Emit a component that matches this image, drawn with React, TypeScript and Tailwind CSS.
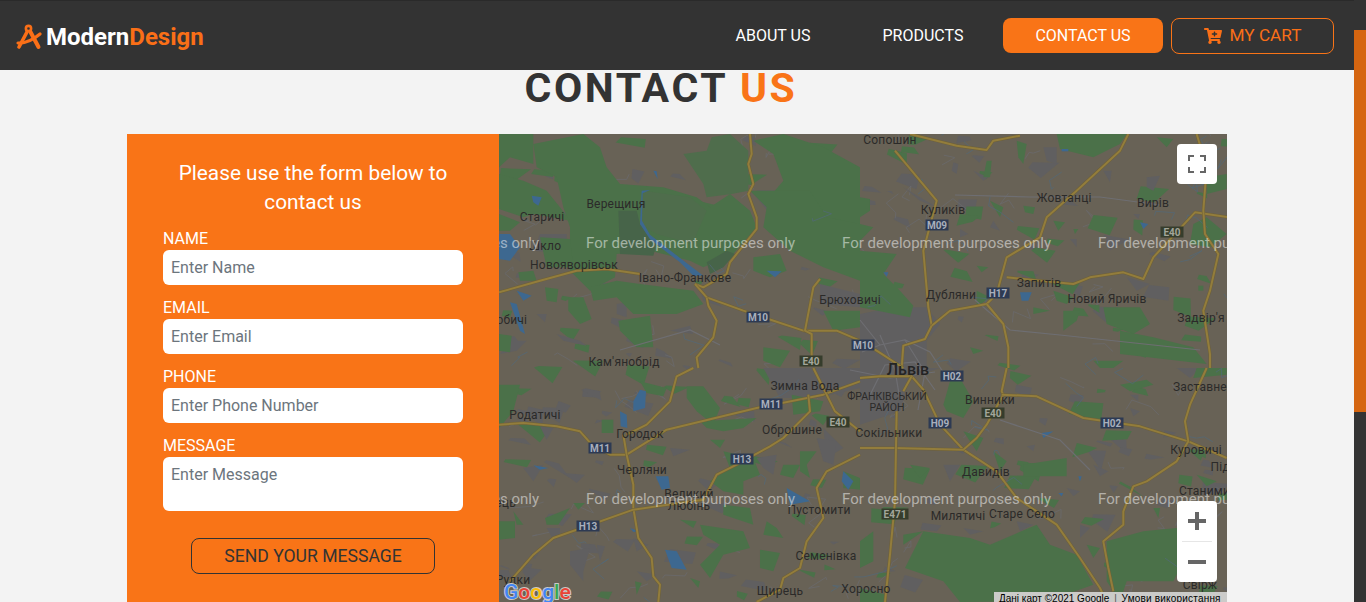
import { FaCartPlus } from "react-icons/fa";

type Q = { x: number; y: number; green: string[]; gray: string[]; water: string[]; roads: string[] };

const quads: Q[] = [
  {
    x: 490, y: 134,
    green: [
      "200,130 140,100 130,30 280,0 330,40 350,100 390,150 520,160 620,190 660,220 720,180 780,230 800,280 730,360 640,400 600,380 480,350 380,360 375,430 300,470 240,410 240,280 220,220",
      "27,120 100,140 170,170 210,220 240,260 130,240 100,250 27,225",
      "27,0 130,0 130,90 60,70 27,100",
      "300,460 380,440 450,450 610,470 640,510 560,540 430,540 380,490 310,500",
      "385,560 480,545 490,640 440,640 390,590",
      "235,490 280,490 305,555 270,570 235,530",
      "790,20 880,0 1000,40 1110,100 1110,290 1020,330 960,260 820,210 880,140 850,60",
      "780,170 960,170 1010,250 1110,270 1110,440 1000,400 900,350 820,280 830,220",
      "790,370 870,360 890,410 840,430 790,410",
      "820,640 900,650 870,700 820,680",
      "1000,530 1110,530 1110,580 1030,590",
      "165,460 205,465 200,505 170,500",
      "27,600 65,605 60,655 27,650",
      "85,415 130,410 140,440 90,440",
      "27,240 90,265 60,290 27,290",
      "150,310 240,315 250,400 170,400",
    ],
    gray: [
      "150,300 230,300 230,360 130,350",
      "200,600 270,620 290,635 220,620",
      "60,620 110,620 80,650 30,660",
      "630,470 700,520 640,500",
      "380,510 410,505 410,550 380,540",
      "140,540 170,540 165,565",
      "540,590 600,575 610,600",
      "990,450 1110,480 1110,520 990,510",
      "205,240 295,205 290,220 235,250",
    ],
    water: [
      "27,300 60,300 90,340 60,380 27,375",
      "125,185 155,190 145,215 130,205",
      "490,110 500,112 503,135",
      "455,170 480,168 458,178 456,260 480,302 570,372 640,425 610,425 570,385 480,316 450,270",
      "60,505 80,510 105,600 90,590",
      "80,470 125,485 100,500",
      "830,410 875,412 855,430",
    ],
    roads: [
      "M27,475 L150,440 L260,410 L350,405 L450,420",
      "M780,0 L785,60 L775,90 L790,150 L775,180 L800,250 L800,285 L720,385 L710,420 L640,460 L615,450",
      "M615,450 L650,490 L760,530 L940,590 L1040,590 L1110,620",
      "M650,490 L655,515 L680,560 L670,610 L620,670 L625,702",
      "M990,435 L970,460 L945,590 L965,600 L965,680",
    ],
  },
  {
    x: 860, y: 134,
    green: [
      "0,190 30,195 30,230 0,250", "0,270 40,280 0,320",
      "380,80 395,80 390,130 370,130",
      "590,0 800,0 780,30 700,70 600,45", "890,10 940,15 920,40",
      "470,20 500,30 490,90 475,70",
      "1040,130 1100,120 1100,165 1040,180",
      "1000,270 1040,250 1100,300 1050,340 990,330",
      "490,215 525,220 520,240 495,235", "580,260 615,265 595,290", "390,200 430,220 420,250",
      "0,350 110,360 70,420 120,470 160,515 150,550 0,520",
      "350,470 390,490 350,520", "580,470 640,490 620,510 590,500",
      "520,520 570,530 520,540", "610,530 660,530 650,560 610,590",
      "730,520 840,520 870,570 820,600 740,570",
      "780,590 880,610 1000,640 1040,690 780,660",
      "700,680 790,680 760,702 720,702", "330,640 370,650 340,660",
      "1015,455 1030,455 1030,470 1015,470", "350,395 385,400 365,415",
      "640,285 655,285 645,300",
    ],
    gray: [
      "0,540 100,520 200,520 240,570 200,620 200,702 0,702",
      "130,160 230,220 180,200", "550,40 590,40 590,90 560,80",
      "340,110 385,130 370,140", "860,130 900,125 880,170 860,160",
      "730,110 755,110 750,145", "630,315 650,315 650,340",
      "400,260 420,290 390,280", "800,430 870,450 830,470",
      "280,85 295,90 290,120 275,110", "300,285 325,300 300,310",
      "820,240 840,240 835,255", "1030,40 1050,20 1040,100",
    ],
    water: [
      "480,475 515,475 505,500 485,500",
      "840,265 865,270 850,285",
      "605,45 625,45 625,52 605,52",
      "70,415 85,415 80,428",
    ],
    roads: [
      "M150,0 L290,35 L380,48 L400,20 L480,5",
      "M105,50 L230,200 L190,350 L205,520 L215,575 L195,615 L130,635 L125,702",
      "M215,575 L270,530 L380,510 L410,480 L440,370 L540,310 L560,250 L650,170 L780,50 L805,0",
      "M440,430 L640,450 L690,430 L790,415 L850,435 L880,370 L1005,235 L1110,250",
      "M1010,0 L1040,100 L1030,230 L1035,300 L1075,360 L1050,470 L1030,530 L1050,660 L1050,702",
      "M380,510 L430,570 L445,640 L445,702",
      "M0,625 L50,650 L130,702",
    ],
  },
  {
    x: 490, y: 368,
    green: [
      "450,40 530,60 520,85 470,75",
      "590,55 640,55 690,120 670,170 620,130 590,90",
      "335,155 370,155 370,195 335,195",
      "630,160 800,150 760,180 700,190 650,180",
      "660,215 705,215 690,240",
      "700,250 790,270 810,320 760,340 760,380 700,370 660,340 720,300",
      "880,290 930,290 910,330 870,320",
      "930,250 980,250 950,290 960,330 930,310",
      "700,410 780,420 790,470 700,440",
      "570,455 620,460 610,480",
      "630,470 760,490 780,540 700,560 660,630 630,590 690,530 640,500",
      "810,545 870,555 850,610 810,600",
      "830,460 860,480 880,510 820,500",
      "70,430 100,470 80,470",
      "165,450 240,420 205,470 170,470",
      "27,460 75,460 75,510 27,515",
      "250,405 285,405 265,425",
      "905,80 1000,100 990,130 910,140",
      "27,50 90,50 70,130 27,180",
      "600,630 630,640 625,660",
      "435,640 455,645 440,680",
      "1060,310 1110,330 1110,365 1060,360",
    ],
    gray: [
      "800,270 860,260 850,320 820,300", "240,550 300,540 280,610 240,590",
      "240,590 280,590 280,640", "100,300 160,290 130,340",
      "320,530 345,535 330,580", "170,480 210,480 210,510 190,515",
      "1000,180 1060,240 1010,270",
      "820,0 1110,0 1110,60 980,90 870,90",
      "980,210 1040,220 1030,290 1000,280",
      "540,240 600,245 550,265", "220,315 285,320 260,345",
      "150,175 190,180 170,215", "430,510 475,530 440,550", "440,610 500,620 470,640",
    ],
    water: [
      "430,100 450,65 468,70 465,120 430,130",
      "390,130 410,140 412,180 392,175",
      "497,325 535,325 540,360 515,365",
      "525,545 560,550 590,605 545,600",
      "890,360 960,400 900,410",
      "1060,310 1090,340 1075,365 1055,340",
      "130,292 175,300 150,305",
      "420,480 445,490 430,492",
    ],
    roads: [
      "M610,0 L560,25 L540,100 L470,170 L410,200",
      "M27,170 L100,165 L200,175 L270,190 L310,235 L360,260 L410,260 L530,185 L800,120 L1000,80 L1110,40",
      "M400,200 L410,260 L430,350 L430,420 L445,510 L485,570 L490,625 L510,650 L505,702",
      "M60,640 L130,560 L190,510 L430,425 L640,395 L680,320 L740,290 L840,235 L880,210 L960,130 L955,80",
      "M970,0 L1035,130 L1110,190",
      "M1110,260 L1010,310 L980,360 L1000,450 L950,520 L930,600 L880,630 L870,665 L800,702",
    ],
  },
  {
    x: 860, y: 368,
    green: [
      "270,40 300,30 340,100 310,150 260,130 250,110",
      "490,290 620,270 620,325 490,325",
      "150,290 210,300 180,330",
      "400,250 440,280 420,310",
      "190,490 330,510 390,530 530,470 570,530 650,560 700,650 560,700 300,702 250,640 135,600",
      "0,520 40,490 40,580 0,600",
      "740,520 850,490 950,480 980,560 940,640 800,640 780,700 740,640",
      "1010,320 1070,340 1040,355",
      "780,50 860,35 880,50 810,70",
      "680,530 720,540 700,570",
      "130,500 190,490 130,530",
      "0,660 80,680 70,702 0,702",
      "880,420 900,420 895,450",
      "310,190 370,210 350,250",
      "1000,30 1100,20 1100,0 1010,0",
    ],
    gray: [
      "0,0 240,0 150,30 120,130 0,170",
      "810,80 835,80 835,100", "810,120 840,130 820,145",
      "700,290 745,310 720,325", "620,360 660,370 640,385",
      "500,235 525,230 520,250", "310,480 370,490 330,500",
      "470,460 520,470 480,490", "660,470 690,480 660,510",
      "250,290 300,290 270,340", "950,0 1020,0 990,30",
    ],
    water: ["595,375 610,375 605,385", "545,195 580,190 550,210", "655,325 665,325 660,340"],
    roads: [
      "M0,30 L60,25 L155,25 L190,65 L240,170 L310,245 L410,310 L470,390 L590,470 L660,570 L720,660 L740,702",
      "M0,240 L100,240 L310,245 L350,210 L380,170 L430,80 L425,70 L440,0",
      "M110,130 L105,400 L90,560 L75,702",
      "M155,25 L130,70",
      "M425,80 L530,85 L670,150 L840,175 L985,220 L1100,270",
      "M1040,0 L990,110 L975,160 L985,220 L950,280 L860,340 L820,355 L790,430 L790,470 L730,520 L745,600 L760,670",
    ],
  },
];

const forest = [
  "580,60 650,50 665,10 720,0 775,50 775,170 725,180 650,190 640,150",
  "460,170 600,190 650,230 620,300 610,330 500,300 450,270",
];
const forestDark = ["385,230 440,230 450,270 500,330 490,365 390,360", "650,385 710,350 735,360 700,400 660,420"];

/* small scattered fields, lanes and streams: the fine grain of the map */
function makeGrain() {
  let s = 20210;
  const r = () => {
    s = (s * 1103515245 + 12345) & 0x7fffffff;
    return s / 0x7fffffff;
  };
  const blob = (w: number) => {
    const x = 499 + r() * 728;
    const y = 134 + r() * 468;
    return `${x},${y} ${x + w * (0.5 + r())},${y + w * 0.3 * r()} ${x + w * (0.3 + r())},${y + w * (0.4 + r() * 0.6)} ${x - w * 0.3 * r()},${y + w * 0.7 * r()}`;
  };
  const line = () => {
    const x = 499 + r() * 728;
    const y = 134 + r() * 468;
    return `M${x},${y} l${20 * r() - 10},${20 * r() - 10} l${40 * r() - 20},${24 * r() - 12} l${30 * r() - 15},${24 * r() - 12}`;
  };
  return {
    green: Array.from({ length: 110 }, () => blob(8 + r() * 14)),
    gray: Array.from({ length: 120 }, () => blob(6 + r() * 16)),
    lanes: Array.from({ length: 90 }, line),
    streams: Array.from({ length: 45 }, line),
  };
}
const grain = makeGrain();

const cityLines = [
  "M862,352 L880,345 L905,340 L930,352 L945,375",
  "M870,395 L885,365 L915,362 L935,390",
  "M880,335 L895,370 L900,400",
  "M850,370 L890,378 L935,372",
  "M905,340 L925,372 L918,410",
  "M860,320 L880,345",
  "M955,195 L1030,197 L1100,197 L1160,205",
  "M975,300 L1010,330 L1060,335 L1200,350",
  "M620,350 L690,330 L720,345",
  "M1000,420 L1060,440 L1090,470",
];

const labels: [string, number, number][] = [
  ["Сопошин", 890, 140], ["Верещиця", 616, 204], ["Старичі", 542, 217], ["Куликів", 943, 210],
  ["Жовтанці", 1064, 198], ["Вирів", 1153, 203], ["Шкло", 545, 246], ["Новояворівськ", 574, 265],
  ["Запитів", 1039, 283], ["Дубляни", 951, 295], ["Новий Яричів", 1107, 299], ["Брюховичі", 850, 300],
  ["Івано-Франкове", 685, 278], ["Задвір'я", 1201, 318], ["Кам'янобрід", 624, 362], ["Зимна Вода", 805, 386],
  ["Винники", 990, 400], ["Заставне", 1200, 387], ["Родатичі", 535, 415], ["Городок", 640, 434],
  ["Оброшине", 792, 430], ["Сокільники", 889, 433], ["Куровичі", 1196, 450], ["Давидів", 986, 472],
  ["Черляни", 642, 470], ["Великий", 689, 494], ["Любінь", 689, 506], ["Пустомити", 819, 510],
  ["Семенівка", 826, 556], ["Милятичі", 958, 516], ["Старе Село", 1022, 514], ["Підгайці", 1235, 467],
  ["Станимир", 1208, 491], ["Щирець", 780, 591], ["Хоросно", 866, 589], ["Свірж", 1200, 585],
  ["Рудки", 513, 580], ["Любичі", 506, 320], ["Стрілець", 490, 503],
];

const badges: [string, number, number, boolean][] = [
  ["M09", 937, 225, false], ["M10", 758, 317, false], ["M10", 863, 345, false], ["E40", 811, 361, true],
  ["H17", 998, 293, false], ["E40", 1172, 232, true], ["H02", 952, 376, false], ["M11", 771, 404, false],
  ["M11", 600, 448, false], ["E40", 838, 422, true], ["H09", 940, 423, false], ["E40", 993, 413, true],
  ["H02", 1112, 423, false], ["H13", 742, 459, false], ["H13", 588, 526, false], ["E471", 895, 514, true],
];

const marks: [number, number][] = [
  [330, 243], [586, 243], [842, 243], [1098, 243],
  [330, 499], [586, 499], [842, 499], [1098, 499],
];

function MapDrawing() {
  return (
    <svg viewBox="499 134 728 468" className="block w-[728px] h-[468px]" style={{ fontFamily: "Roboto, sans-serif" }}>
      <rect x="499" y="134" width="728" height="468" fill="#686256" />
      {grain.gray.map((p, j) => <polygon key={j} points={p} fill="#605f60" />)}
      {grain.lanes.map((d, j) => <path key={j} d={d} fill="none" stroke="#6a6a6c" strokeWidth="0.8" />)}
      {grain.green.map((p, j) => <polygon key={j} points={p} fill="#4b7149" />)}
      {quads.map((q, i) => (
        <g key={i} transform={`translate(${q.x} ${q.y}) scale(0.33333)`}>
          {q.gray.map((p, j) => <polygon key={j} points={p} fill="#605f60" />)}
          {q.green.map((p, j) => <polygon key={j} points={p} fill="#4b7149" />)}
          {i === 0 && forest.map((p, j) => <polygon key={j} points={p} fill="#4f6d4c" />)}
          {i === 0 && forestDark.map((p, j) => <polygon key={j} points={p} fill="#476449" />)}
          {q.water.map((p, j) => <polygon key={j} points={p} fill="#3d6890" />)}
        </g>
      ))}
      {grain.streams.map((d, j) => <path key={j} d={d} fill="none" stroke="#52687a" strokeWidth="0.7" />)}
      {cityLines.map((d, j) => <path key={j} d={d} fill="none" stroke="#6e6e72" strokeWidth="1.2" />)}
      {quads.map((q, i) => (
        <g key={i} transform={`translate(${q.x} ${q.y}) scale(0.33333)`}>
          {q.roads.map((d, j) => (
            <g key={j}>
              <path d={d} fill="none" stroke="#6f6136" strokeWidth="9" strokeLinejoin="round" />
              <path d={d} fill="none" stroke="#937d3c" strokeWidth="6" strokeLinejoin="round" />
            </g>
          ))}
        </g>
      ))}
      {labels.map(([t, x, y]) => (
        <text key={t} x={x} y={y + 4} textAnchor="middle" fontSize="12" fill="#2b2a29" letterSpacing="0.2">{t}</text>
      ))}
      <text x="908" y="375" textAnchor="middle" fontSize="16" fontWeight="500" fill="#242424">Львів</text>
      <text x="887" y="400" textAnchor="middle" fontSize="10.5" fill="#2b2a29">ФРАНКІВСЬКИЙ</text>
      <text x="887" y="411" textAnchor="middle" fontSize="10.5" fill="#2b2a29">РАЙОН</text>
      {badges.map(([t, x, y, eur], i) => {
        const w = t.length > 3 ? 27 : 23;
        return (
          <g key={i}>
            <rect x={x - w / 2} y={y - 5.5} width={w} height="11" fill={eur ? "#363d2c" : "#2d3a53"} />
            <text x={x} y={y + 3.5} textAnchor="middle" fontSize="10" fontWeight="700" fill={eur ? "#a3a69a" : "#a8afbc"}>{t}</text>
          </g>
        );
      })}
      {marks.map(([x, y], i) => (
        <text key={i} x={x} y={y + 5} fontSize="15" fill="#ffffff" fillOpacity="0.5">
          For development purposes only
        </text>
      ))}
    </svg>
  );
}

function Field({ label, placeholder, area }: { label: string; placeholder: string; area?: boolean }) {
  return (
    <label className="block mb-[15px]">
      <span className="block text-white text-base leading-[15px] pb-[4px]">{label}</span>
      {area ? (
        <textarea
          placeholder={placeholder}
          className="block w-full h-[54px] rounded-md bg-white px-2 py-[6px] text-base leading-6 placeholder:text-[#6c757d] resize-none outline-none"
        />
      ) : (
        <input
          placeholder={placeholder}
          className="block w-full h-[35px] rounded-md bg-white px-2 text-base placeholder:text-[#6c757d] outline-none"
        />
      )}
    </label>
  );
}

export default function App() {
  return (
    <div className="flex h-[602px] overflow-hidden bg-[#f3f3f3] font-['Roboto',sans-serif]">
      <div className="w-[1354px] shrink-0">
        <header className="h-[70px] bg-[#333333] border-t border-[#2a2a2a] flex items-center pl-[16px] pr-[20px]">
          <div className="flex items-center pt-[2px]">
            <svg viewBox="0 0 26 26" className="w-[26px] h-[26px] mr-[4px] text-[#fa6f17]" fill="none" stroke="currentColor" strokeLinecap="round">
              <circle cx="12.5" cy="4.5" r="2.6" strokeWidth="2.6" />
              <path d="M11 8 L3 23" strokeWidth="3.6" />
              <path d="M14.5 8 L22.5 23" strokeWidth="4" />
              <path d="M2 19 C 10 19.5, 18 15, 24 10" strokeWidth="3.2" />
            </svg>
            <span className="text-2xl font-bold leading-none">
              <span className="text-white">Modern</span>
              <span className="text-[#fa6f17]">Design</span>
            </span>
          </div>
          <nav className="ml-auto flex items-center">
            <a className="w-[140px] text-center text-white text-base">ABOUT US</a>
            <a className="w-[160px] text-center text-white text-base">PRODUCTS</a>
            <a className="w-[160px] h-[35px] flex items-center justify-center rounded-lg bg-[#f97417] text-white text-base">CONTACT US</a>
            <a className="ml-2 w-[163px] h-[36px] flex items-center justify-center gap-2 rounded-lg border border-[#f97417] text-[#fa6f17] text-[17.2px]">
              <FaCartPlus className="w-[18px] h-[16px]" />
              MY CART
            </a>
          </nav>
        </header>
        <main>
          <h1 className="h-[36px] leading-[37px] pr-[32px] mb-[28px] text-center text-[41px] font-bold tracking-[2.6px] text-[#333333]">
            CONTACT <span className="text-[#f97417]">US</span>
          </h1>
          <section className="mx-[127px] flex h-[468px]">
            <div className="w-[372px] shrink-0 bg-[#f97417] pt-[25px] px-[36px]">
              <h2 className="text-center text-white text-[20.8px] leading-[29px] mb-[14px]">
                Please use the form below to contact us
              </h2>
              <form>
                <Field label="NAME" placeholder="Enter Name" />
                <Field label="EMAIL" placeholder="Enter Email" />
                <Field label="PHONE" placeholder="Enter Phone Number" />
                <Field label="MESSAGE" placeholder="Enter Message" area />
                <div className="flex justify-center mt-[27px]">
                  <button type="button" className="w-[244px] h-[36px] rounded-lg border border-[#333333] text-[#333333] text-[17.6px] leading-[32px]">
                    SEND YOUR MESSAGE
                  </button>
                </div>
              </form>
            </div>
            <div className="relative w-[728px] overflow-hidden">
              <MapDrawing />
              <button className="absolute top-[10px] right-[10px] w-[40px] h-[40px] bg-white rounded-sm flex items-center justify-center">
                <svg viewBox="0 0 18 18" className="w-[18px] h-[18px]" fill="none" stroke="#666666" strokeWidth="2">
                  <path d="M1 6V1H6M12 1H17V6M17 12V17H12M6 17H1V12" />
                </svg>
              </button>
              <div className="absolute top-[367px] right-[10px] w-[40px] h-[81px] bg-white rounded-sm flex flex-col items-center">
                <div className="h-[40px] flex items-center justify-center">
                  <svg viewBox="0 0 18 18" className="w-[18px] h-[18px]" fill="#666666"><path d="M7 0h4v7h7v4h-7v7H7v-7H0V7h7z" /></svg>
                </div>
                <div className="w-[30px] h-px bg-[#e6e6e6]" />
                <div className="h-[40px] flex items-center justify-center">
                  <svg viewBox="0 0 18 18" className="w-[18px] h-[18px]" fill="#666666"><path d="M0 7h18v4H0z" /></svg>
                </div>
              </div>
              <div className="absolute left-[5px] top-[447px] text-[21px] leading-[22px] font-medium [-webkit-text-stroke:2px_#c9c9c7] [paint-order:stroke_fill]">
                <span className="text-[#4285f4]">G</span>
                <span className="text-[#ea4335]">o</span>
                <span className="text-[#fbbc05]">o</span>
                <span className="text-[#4285f4]">g</span>
                <span className="text-[#34a853]">l</span>
                <span className="text-[#ea4335]">e</span>
              </div>
              <div className="absolute left-[495px] top-[458px] w-[233px] h-[14px] bg-[#cbcbc9] pl-[5px] text-[10px] leading-[14px] text-black whitespace-nowrap font-['Liberation_Sans',sans-serif]">
                Дані карт ©2021 Google <span className="mx-[2px] text-[#555]">|</span> <span className="tracking-[0.2px]">Умови використання</span>
              </div>
            </div>
          </section>
        </main>
      </div>
      <div className="w-[12px] shrink-0 bg-[#333333] pt-[30px]">
        <div className="h-[382px] bg-[#d56510]" />
      </div>
    </div>
  );
}
